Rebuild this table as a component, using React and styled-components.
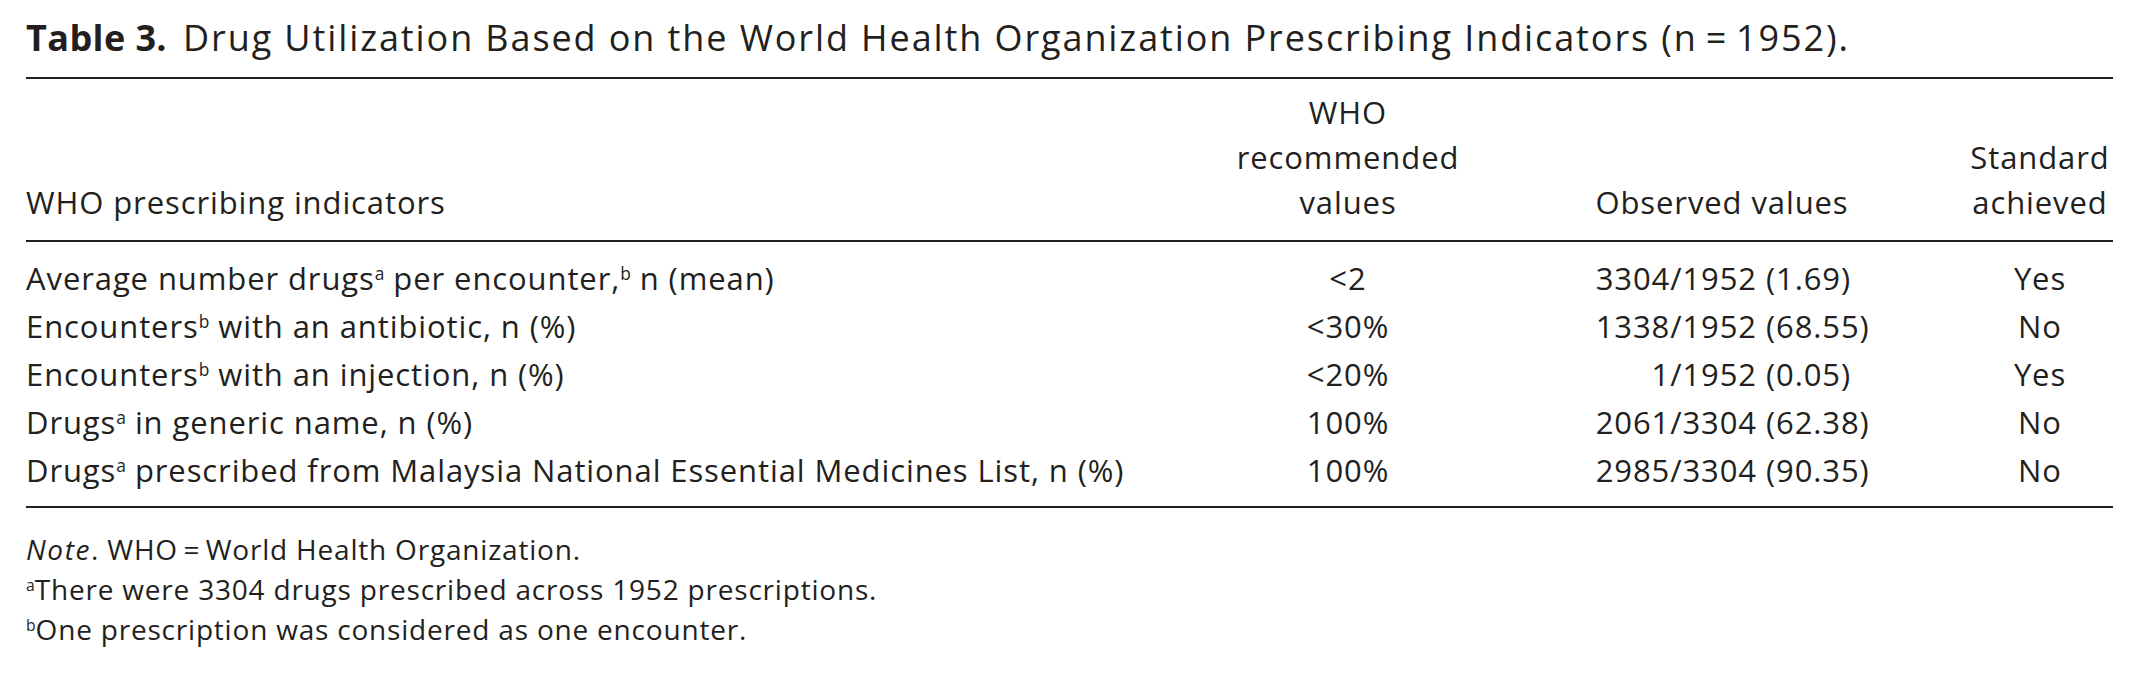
import React from "react";
import styled, { createGlobalStyle } from "styled-components";

const GlobalStyle = createGlobalStyle`
  body {
    margin: 0;
    background: #ffffff;
  }
`;

const rows = [
  { label: ["Average number drugs", "a", " per encounter,", "b", " n (mean)"], rec: "<2", num: "3304/1952", pct: "(1.69)", ok: "Yes" },
  { label: ["Encounters", "b", " with an antibiotic, n (%)"], rec: "<30%", num: "1338/1952", pct: "(68.55)", ok: "No" },
  { label: ["Encounters", "b", " with an injection, n (%)"], rec: "<20%", num: "1/1952", pct: "(0.05)", ok: "Yes" },
  { label: ["Drugs", "a", " in generic name, n (%)"], rec: "100%", num: "2061/3304", pct: "(62.38)", ok: "No" },
  { label: ["Drugs", "a", " prescribed from Malaysia National Essential Medicines List, n (%)"], rec: "100%", num: "2985/3304", pct: "(90.35)", ok: "No" },
];

// odd entries of a label are superscripts
const Label = ({ parts }) =>
  parts.map((p, i) => (i % 2 === 1 ? <Sup key={i}>{p}</Sup> : <span key={i}>{p}</span>));

export default function App() {
  return (
    <Page>
      <GlobalStyle />
      <Caption>
        <CaptionLabel>Table 3.</CaptionLabel>
        Drug Utilization Based on the World Health Organization Prescribing Indicators (n{"\u2009=\u2009"}1952).
      </Caption>
      <Table>
        <HeadRow>
          <Cell>WHO prescribing indicators</Cell>
          <Cell $align="center">
            WHO
            <br />
            recommended
            <br />
            values
          </Cell>
          <Cell $align="center" $pr={29}>Observed values</Cell>
          <Cell $align="center">
            Standard
            <br />
            achieved
          </Cell>
        </HeadRow>
        <TableBody>
          {rows.map((r, i) => (
            <Row key={i}>
              <Cell>
                <Label parts={r.label} />
              </Cell>
              <Cell $align="center">{r.rec}</Cell>
              <Observed>
                <ObsNum>{r.num}</ObsNum>
                <span>{r.pct}</span>
              </Observed>
              <Cell $align="center">{r.ok}</Cell>
            </Row>
          ))}
        </TableBody>
      </Table>
      <Notes>
        <div>
          <i>Note</i>. WHO{"\u2009=\u2009"}World Health Organization.
        </div>
        <div>
          <Sup>a</Sup>There were 3304 drugs prescribed across 1952 prescriptions.
        </div>
        <div>
          <Sup>b</Sup>One prescription was considered as one encounter.
        </div>
      </Notes>
    </Page>
  );
}

const Page = styled.div`
  padding: 16px 26px 0 26px;
  font-family: "Open Sans", "Noto Sans", "Liberation Sans", sans-serif;
  font-size: 31px;
  letter-spacing: 0.9px;
  color: #231f20;
`;

const Caption = styled.div`
  font-size: 36px;
  line-height: 44px;
  letter-spacing: 1.9px;
  margin-bottom: 17px;
  white-space: nowrap;
`;

const CaptionLabel = styled.span`
  font-weight: 700;
  letter-spacing: 0.4px;
  margin-right: 16px;
`;

const Table = styled.div`
  border-top: 2px solid #231f20;
  border-bottom: 2px solid #231f20;
`;

const Row = styled.div`
  display: grid;
  grid-template-columns: 1164px 316px 461px 146px;
  line-height: 48px;
  white-space: nowrap;
`;

const HeadRow = styled(Row)`
  align-items: end;
  line-height: 45px;
  padding: 11px 0 15px;
  border-bottom: 2px solid #231f20;
`;

const TableBody = styled.div`
  padding: 12px 0 12px;
`;

const Cell = styled.div`
  text-align: ${(p) => p.$align || "left"};
  padding-right: ${(p) => p.$pr || 0}px;
`;

const Observed = styled.div`
  display: grid;
  grid-template-columns: 251px auto;
  column-gap: 9px;
`;

const ObsNum = styled.span`
  text-align: right;
`;

const Sup = styled.sup`
  font-size: 0.56em;
  line-height: 0;
  vertical-align: 0.6em;
  letter-spacing: 0;
`;

const Notes = styled.div`
  margin-top: 21px;
  font-size: 28px;
  letter-spacing: 0.8px;
  line-height: 40px;

  i {
    letter-spacing: 1.6px;
  }
`;
